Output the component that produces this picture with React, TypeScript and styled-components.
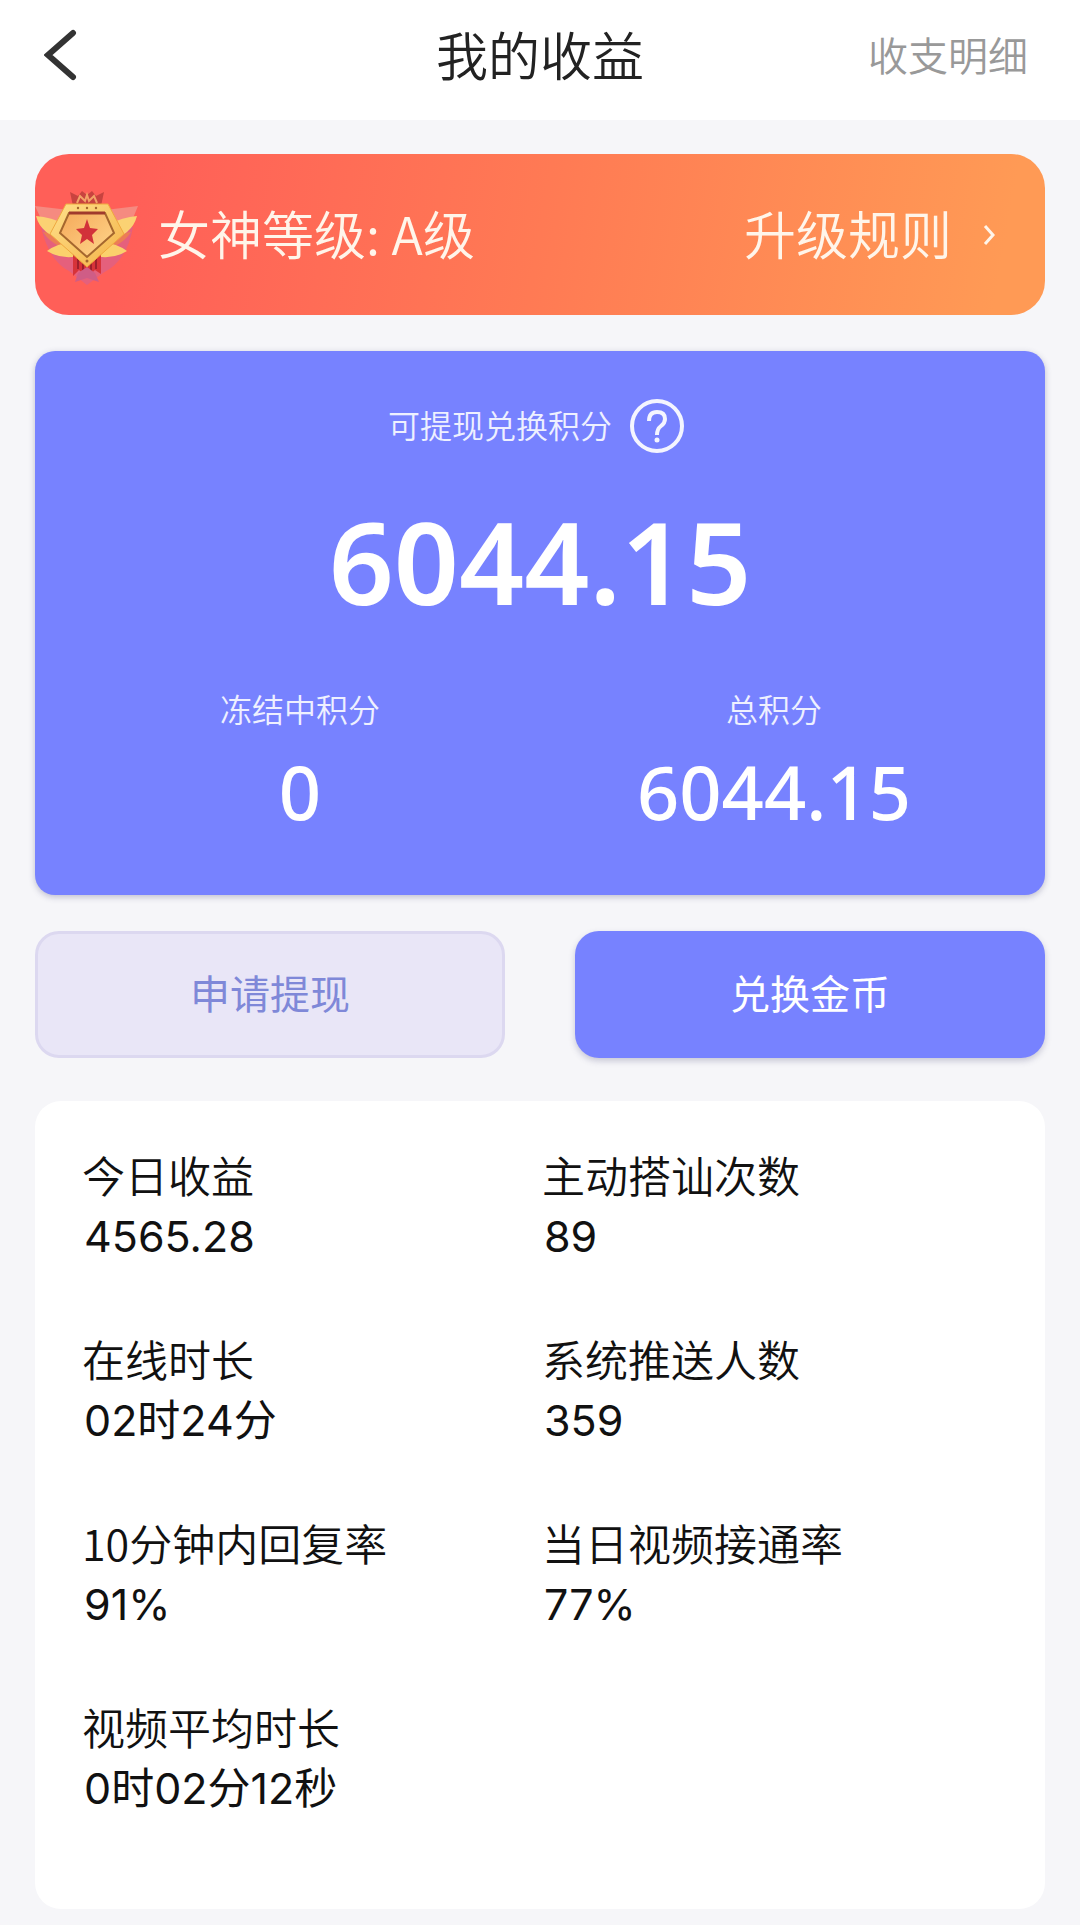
import React from "react";
import styled, { createGlobalStyle } from "styled-components";

const sans = `"Noto Sans CJK SC", sans-serif`;
const numeric = `"Noto Sans", "Noto Sans CJK SC", sans-serif`;
const grotesk = `Inter, "Noto Sans CJK SC", sans-serif`;

const GlobalStyle = createGlobalStyle`
  *, *::before, *::after { box-sizing: border-box; }
  body { margin: 0; background: #f6f6f9; font-family: ${sans}; }
  h1, p, dl, dt, dd { margin: 0; }
  button, a { font-family: inherit; color: inherit; text-decoration: none; }
  button { border: 0; padding: 0; background: none; cursor: pointer; }
`;

const Header = styled.header`
  display: grid;
  grid-template-columns: 1fr auto 1fr;
  align-items: center;
  height: 120px;
  padding: 0 44px 10px;
  background: #fff;
`;

const BackButton = styled.button`
  display: flex;
  justify-self: start;
`;

const Title = styled.h1`
  padding-bottom: 2px;
  font-size: 52px;
  line-height: 60px;
  font-weight: 350;
  color: #222;
`;

const HeaderLink = styled.a`
  justify-self: end;
  padding: 0 8px 2px 0;
  font-size: 40px;
  line-height: 60px;
  font-weight: 350;
  && { color: #999; }
`;

const Main = styled.main`
  display: flex;
  flex-direction: column;
  padding: 34px 35px 18px;
`;

const LevelCard = styled.section`
  display: flex;
  align-items: center;
  height: 161px;
  border-radius: 34px;
  padding-right: 45px;
  color: #fff5ea;
  font-size: 52px;
  line-height: 60px;
  font-weight: 350;
  background: linear-gradient(100deg, #ff5f58 10%, #ff7a54 50%, #ff9a55 95%);
`;

const LevelText = styled.p`
  flex: 1;
  padding: 0 0 4px 20px;
`;

const RulesLink = styled.a`
  display: flex;
  align-items: center;
  gap: 28px;
`;

const RulesText = styled.span`
  padding-bottom: 4px;
`;

const PointsCard = styled.section`
  margin-top: 36px;
  padding: 42px 0 58px;
  border-radius: 20px;
  background: #7782ff;
  box-shadow: 0 2px 6px rgba(60, 60, 110, 0.3);
  color: #fff;
  text-align: center;
`;

const PointsLabel = styled.div`
  display: flex;
  align-items: center;
  justify-content: center;
  gap: 18px;
  height: 66px;
  padding-right: 8px;
  font-size: 32px;
  line-height: 48px;
  font-weight: 350;
  color: #eef0ff;
`;

const PointsText = styled.span`
  padding-bottom: 4px;
`;

const HelpButton = styled.button`
  display: flex;
`;

const Total = styled.p`
  margin-top: 30px;
  font: 600 114px/144px ${numeric};
`;

const Split = styled.dl`
  display: grid;
  grid-template-columns: 1fr 1fr;
  margin-top: 51px;
  padding: 0 34px 0 28px;
`;

const SplitLabel = styled.dt`
  font-size: 32px;
  line-height: 48px;
  font-weight: 350;
  color: #eef0ff;
`;

const SplitValue = styled.dd`
  margin-top: 15px;
  font: 500 74px/90px ${numeric};
`;

const Actions = styled.div`
  display: grid;
  grid-template-columns: 1fr 1fr;
  gap: 70px;
  margin-top: 36px;
`;

const ActionButton = styled.button<{ $primary?: boolean }>`
  && {
    height: 127px;
    padding-bottom: 5px;
    border-radius: 24px;
    font-size: 40px;
    line-height: 60px;
    color: ${(p) => (p.$primary ? "#fff" : "#7f88d8")};
    background: ${(p) => (p.$primary ? "#7782ff" : "#e9e6f7")};
    border: ${(p) => (p.$primary ? "0" : "3px solid #dcd8f0")};
    box-shadow: ${(p) => (p.$primary ? "0 3px 6px rgba(60, 60, 110, 0.25)" : "none")};
  }
`;

const Stats = styled.dl`
  display: grid;
  grid-template-columns: 460px 1fr;
  row-gap: 62px;
  margin-top: 43px;
  padding: 43px 47px 91px;
  border-radius: 26px;
  background: #fff;
  color: #111;
`;

const StatLabel = styled.dt`
  font-size: 43px;
  line-height: 60px;
  font-weight: 350;
`;

const StatValue = styled.dd`
  padding: 2px 0 0 2px;
  font: 400 43px/60px ${grotesk};
`;

function Badge() {
  return (
    <svg width="103" height="104" viewBox="0 0 103 104" aria-hidden="true">
      <defs>
        <linearGradient id="gold" x1="0" y1="0" x2="1" y2="1">
          <stop offset="0" stopColor="#ffe08a" />
          <stop offset="1" stopColor="#f3b247" />
        </linearGradient>
        <linearGradient id="face" x1="0" y1="0" x2="1" y2="1">
          <stop offset="0" stopColor="#f5a95a" />
          <stop offset="1" stopColor="#ffd78c" />
        </linearGradient>
      </defs>
      <path d="M6 44 Q14 78 34 88 L52 102 L68 90 Q92 78 98 44Z" fill="#d0609a" opacity=".55" />
      <path d="M0 23 L34 27 L28 44 L8 40Z M103 23 L70 27 L76 44 L96 40Z" fill="#f58a80" />
      <path d="M8 49 L34 53 L36 66 Q18 64 8 49Z M96 49 L70 53 L68 66 Q86 64 96 49Z" fill="#ec7d55" />
      <path d="M1 33 Q16 34 32 42 L30 57 Q6 52 1 33Z M102 33 Q88 34 72 42 L74 57 Q97 52 102 33Z" fill="#fbd273" />
      <path d="M12 68 Q24 59 38 60 L48 72 Q28 78 12 68Z M92 68 Q80 59 66 60 L56 72 Q76 78 92 68Z" fill="#fbd06c" />
      <path d="M38 70 H66 V91 L60 87 L52 94 L44 87 L38 93Z" fill="#d73339" />
      <path d="M43 74V86 M48 76V90 M56 76V90 M61 74V86" stroke="#9e1f2c" strokeWidth="2" />
      <path d="M43 90 L52 84 L60 90 L64 99 L52 95 L40 99Z" fill="#cf5d86" />
      <path d="M35 9 L43 13 L47 8 L52 12 L57 8 L61 13 L69 9 L66 23 H38Z" fill="#c8433f" />
      <path d="M42 20 L45 13 L50 18 L52 12 L54 18 L59 13 L62 20" fill="none" stroke="#f3a267" strokeWidth="2" />
      <path d="M31 21 H73 L89 51 L52 84 L15 51Z" fill="url(#gold)" stroke="#efa83f" strokeWidth="1" />
      <path d="M34 30 H70 L79 50 L52 74 L25 50Z" fill="url(#face)" stroke="#a5672e" strokeWidth="2" />
      <path d="M34 30 H70" stroke="#a03a2c" strokeWidth="3" />
      <path d="M52 36 L55 45 L63 46 L57 52 L59 61 L52 56 L45 61 L47 52 L41 46 L49 45Z" fill="#d2323a" />
      <g fill="#a5672e">
        <circle cx="43" cy="25" r="1.2" />
        <circle cx="52" cy="25" r="1.2" />
        <circle cx="61" cy="25" r="1.2" />
        <circle cx="52" cy="78" r="1.5" />
      </g>
    </svg>
  );
}

const stats = [
  ["今日收益", "4565.28"],
  ["主动搭讪次数", "89"],
  ["在线时长", "02时24分"],
  ["系统推送人数", "359"],
  ["10分钟内回复率", "91%"],
  ["当日视频接通率", "77%"],
  ["视频平均时长", "0时02分12秒"],
];

export default function App() {
  return (
    <>
      <GlobalStyle />
      <Header>
        <BackButton aria-label="返回">
          <svg width="36" height="54" viewBox="0 0 36 54" fill="none">
            <path d="M29 5 L4 27 L29 49" stroke="#333" strokeWidth="6" strokeLinecap="round" />
          </svg>
        </BackButton>
        <Title>我的收益</Title>
        <HeaderLink href="#details">收支明细</HeaderLink>
      </Header>
      <Main>
        <LevelCard>
          <Badge />
          <LevelText>女神等级: A级</LevelText>
          <RulesLink href="#rules">
            <RulesText>升级规则</RulesText>
            <svg width="20" height="28" viewBox="0 0 20 28" fill="none" aria-hidden="true">
              <path d="M5 5 L13 14 L5 23" stroke="#fff5ea" strokeWidth="3" />
            </svg>
          </RulesLink>
        </LevelCard>
        <PointsCard>
          <PointsLabel>
            <PointsText>可提现兑换积分</PointsText>
            <HelpButton aria-label="积分说明">
              <svg width="54" height="54" viewBox="0 0 54 54" fill="none" stroke="#f4f5ff">
                <circle cx="27" cy="27" r="25" strokeWidth="4" />
                <path d="M19 22 Q19 13 27 13 Q35 13 35 20 Q35 24 31 27 Q27 30 27 36" strokeWidth="4" />
                <circle cx="27" cy="41" r="2.5" fill="#f4f5ff" stroke="none" />
              </svg>
            </HelpButton>
          </PointsLabel>
          <Total>6044.15</Total>
          <Split>
            <div>
              <SplitLabel>冻结中积分</SplitLabel>
              <SplitValue>0</SplitValue>
            </div>
            <div>
              <SplitLabel>总积分</SplitLabel>
              <SplitValue>6044.15</SplitValue>
            </div>
          </Split>
        </PointsCard>
        <Actions>
          <ActionButton>申请提现</ActionButton>
          <ActionButton $primary>兑换金币</ActionButton>
        </Actions>
        <Stats>
          {stats.map(([label, value]) => (
            <div key={label}>
              <StatLabel>{label}</StatLabel>
              <StatValue>{value}</StatValue>
            </div>
          ))}
        </Stats>
      </Main>
    </>
  );
}
